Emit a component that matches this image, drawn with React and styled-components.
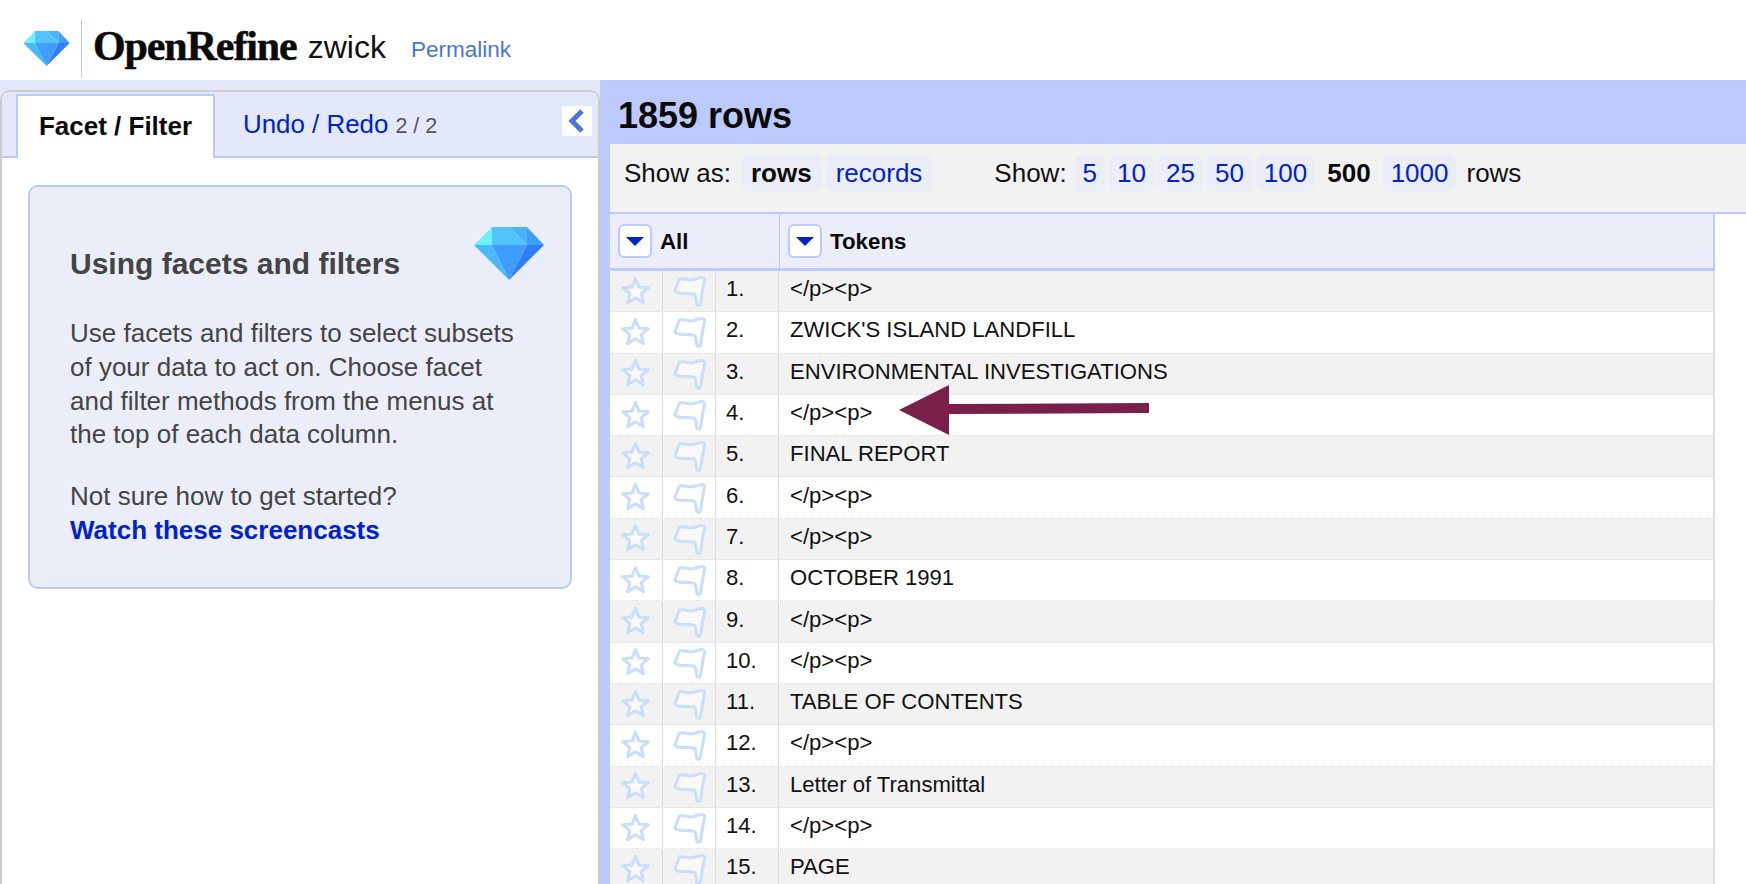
import React from "react";
import styled, { createGlobalStyle } from "styled-components";

const GlobalStyle = createGlobalStyle`
  html, body {
    margin: 0;
    height: 884px;
    overflow: hidden;
    background: #fff;
    font-family: "Liberation Sans", Arial, sans-serif;
  }
`;

const Page = styled.div`
  position: relative;
  width: 1746px;
  height: 884px;
  overflow: hidden;
`;

const Header = styled.header`
  height: 80px;
  display: flex;
  align-items: flex-start;
  box-sizing: border-box;
  padding: 20px 0 0 23px;
`;

const LogoBox = styled.div`
  width: 59px;
  height: 58px;
  border-right: 1px solid #bccafb;
  display: flex;
  align-items: center;
  padding-bottom: 2px;
  box-sizing: border-box;
`;

const Wordmark = styled.span`
  font-family: "Liberation Serif", serif;
  font-weight: 700;
  font-size: 42px;
  line-height: 40px;
  margin: 6px 0 0 11px;
  color: #0a0a0a;
  letter-spacing: -1.1px;
  -webkit-text-stroke: 0.5px #0a0a0a;
`;

const ProjectName = styled.span`
  font-size: 32px;
  line-height: 40px;
  margin: 7px 0 0 11px;
  color: #111;
`;

const Permalink = styled.a`
  font-size: 22.5px;
  line-height: 30px;
  margin: 15px 0 0 25px;
  color: #4a76d8;
`;

const Main = styled.main`
  display: flex;
  height: 804px;
`;

const LeftPanel = styled.section`
  width: 600px;
  flex: none;
  box-sizing: border-box;
  padding-top: 10px;
  background: #e3e8fb;
`;

const TabBox = styled.div`
  height: 100%;
  box-sizing: border-box;
  background: #fff;
  border: 2px solid #ccc;
  border-bottom: none;
  border-radius: 10px 10px 0 0;
`;

const TabBar = styled.div`
  height: 66px;
  box-sizing: border-box;
  display: flex;
  align-items: flex-end;
  padding: 0 6px 0 14px;
  background: #e3e8fb;
  border-bottom: 2px solid #bccafb;
  border-radius: 8px 8px 0 0;
`;

const ActiveTab = styled.div`
  width: 199px;
  height: 64px;
  margin-bottom: -2px;
  box-sizing: border-box;
  background: #fff;
  border: 2px solid #bccafb;
  border-bottom: none;
  font-size: 26px;
  font-weight: 700;
  line-height: 60px;
  text-align: center;
  color: #0a0a0a;
`;

const InactiveTab = styled.div`
  margin-left: 28px;
  height: 62px;
  font-size: 25.9px;
  line-height: 60px;
  color: #0022cc;
`;

const TabCount = styled.span`
  font-size: 21.5px;
  margin-left: 7px;
  color: #555;
`;

const CollapseButton = styled.button`
  width: 30px;
  height: 30px;
  margin: 0 0 20px auto;
  padding: 0;
  border: none;
  border-radius: 2px;
  background: #fff;
  display: flex;
  align-items: center;
  justify-content: center;
  align-self: flex-end;
`;

const HelpCard = styled.div`
  position: relative;
  width: 544px;
  height: 404px;
  margin: 27px 0 0 26px;
  box-sizing: border-box;
  padding: 59px 0 0 40px;
  background: #ebeef8;
  border: 2px solid #bccafb;
  border-radius: 10px;
  color: #444;
`;

const CardGem = styled.div`
  position: absolute;
  top: 40px;
  right: 26px;
`;

const CardTitle = styled.h2`
  margin: 0 0 35px;
  font-size: 30px;
  line-height: 36px;
  font-weight: 700;
  color: #444;
`;

const CardText = styled.p`
  margin: 0 0 28px;
  font-size: 26px;
  line-height: 33.8px;
`;

const CardLink = styled.a`
  display: block;
  font-weight: 700;
  color: #0022cc;
`;

const RightPanel = styled.section`
  flex: 1;
  min-width: 0;
  background: #fff;
`;

const CountBand = styled.div`
  height: 64px;
  box-sizing: border-box;
  padding-left: 18px;
  background: #bccafb;
  font-size: 36px;
  font-weight: 700;
  line-height: 72px;
  color: #0a0a0a;
`;

const Workspace = styled.div`
  height: 740px;
  border-left: 10px solid #bccafb;
`;

const ControlBar = styled.div`
  height: 70px;
  box-sizing: border-box;
  display: flex;
  align-items: flex-start;
  padding: 10px 0 0 14px;
  background: #f2f2f2;
  border-bottom: 2px solid #bccafb;
  font-size: 26px;
  line-height: 38px;
  color: #111;
`;

const ControlLabel = styled.span`
  margin: ${(p) => p.$margin || "0"};
`;

const Chip = styled.span`
  height: 38px;
  padding: 0 ${(p) => p.$pad || 8}px;
  margin-left: ${(p) => p.$gap || 4}px;
  border-radius: 8px;
  background: ${(p) => (p.$plain ? "transparent" : "#ebeef8")};
  color: ${(p) => (p.$current ? "#0a0a0a" : "#0022cc")};
  font-weight: ${(p) => (p.$current ? 700 : 400)};
`;

const Table = styled.div`
  width: 1105px;
`;

const HeaderRow = styled.div`
  display: grid;
  grid-template-columns: 169px 1fr;
  height: 57px;
  box-sizing: border-box;
  background: #ebeef8;
  border-bottom: 3px solid #bccafb;
  border-right: 2px solid #bccafb;
`;

const HeaderCell = styled.div`
  display: flex;
  align-items: center;
  box-sizing: border-box;
  padding-left: 8px;
  font-size: 22.3px;
  font-weight: 700;
  color: #0a0a0a;
  & + & {
    border-left: 1px solid #bccafb;
  }
`;

const HeaderLabel = styled.span`
  margin-top: 2px;
`;

const MenuButton = styled.span`
  width: 34px;
  height: 34px;
  margin-right: 8px;
  box-sizing: border-box;
  display: flex;
  align-items: center;
  justify-content: center;
  background: #fff;
  border: 2px solid #bccafb;
  border-radius: 6px;
  &::after {
    content: "";
    border-left: 9px solid transparent;
    border-right: 9px solid transparent;
    border-top: 9px solid #0022cc;
  }
`;

const Row = styled.div`
  display: grid;
  grid-template-columns: 53px 53px 63px 1fr;
  height: 41.3px;
  box-sizing: border-box;
  background: ${(p) => (p.$odd ? "#f2f2f2" : "#fff")};
  border-bottom: 1px dotted #ddd;
  border-right: 2px solid #ddd;
  font-size: 22.1px;
  color: #111;
`;

const Cell = styled.div`
  display: flex;
  align-items: center;
  box-sizing: border-box;
  padding-left: ${(p) => p.$pad || 0}px;
  padding-bottom: ${(p) => p.$lift || 0}px;
  border-right: ${(p) => (p.$last ? "none" : "1px solid #ddd")};
`;

const RowIcon = styled.svg`
  flex: none;
  overflow: visible;
  filter: blur(0.6px);
`;

const ArrowOverlay = styled.svg`
  position: absolute;
  left: 899px;
  top: 385px;
`;

const Gem = ({ width, height }) => (
  <svg width={width} height={height} viewBox="0 0 70 53">
    <polygon points="0,18 18,0 18,18" fill="#6fefff" />
    <polygon points="18,0 35,0 18,18" fill="#55ccff" />
    <polygon points="35,0 53,0 53,18" fill="#4ab4fb" />
    <polygon points="18,0 35,0 53,18 18,18" fill="#52c4fb" />
    <polygon points="53,0 70,18 53,18" fill="#3f9dfb" />
    <polygon points="0,18 18,18 35,53" fill="#4ab8fb" />
    <polygon points="18,18 53,18 35,53" fill="#3f9dfb" />
    <polygon points="53,18 70,18 35,53" fill="#2f7dfb" />
  </svg>
);

const StarIcon = () => (
  <RowIcon width="31" height="31" viewBox="0 0 30 30">
    <path
      d="M15 2.5l3.4 8.2 8.9.7-6.8 5.7 2.1 8.7-7.6-4.7-7.6 4.7 2.1-8.7-6.8-5.7 8.9-.7z"
      fill="#fff"
      fillOpacity="0.5"
      stroke="#c8defc"
      strokeWidth="3"
      strokeLinejoin="round"
    />
  </RowIcon>
);

const FlagIcon = () => (
  <RowIcon width="32" height="32" viewBox="0 0 30 30">
    <path
      d="M5 4C9 2 14 6 19 4c3-1 6-2 8-1.500 2 .5 2 2 1.500 3.500-1.500 6-2.500 14-3.500 20-.5 3.500-3.500 3-4 0-.5-3 0-7-2-8-4-1.500-12 0-16-1.500-2-.5-2.500-2-1.500-3.500z"
      fill="#fff"
      fillOpacity="0.5"
      stroke="#c8defc"
      strokeWidth="2.8"
      strokeLinejoin="round"
    />
  </RowIcon>
);

const tokens = [
  "</p><p>",
  "ZWICK'S ISLAND LANDFILL",
  "ENVIRONMENTAL INVESTIGATIONS",
  "</p><p>",
  "FINAL REPORT",
  "</p><p>",
  "</p><p>",
  "OCTOBER 1991",
  "</p><p>",
  "</p><p>",
  "TABLE OF CONTENTS",
  "</p><p>",
  "Letter of Transmittal",
  "</p><p>",
  "PAGE",
];

const pageSizes = ["5", "10", "25", "50", "100", "500", "1000"];

export default function App() {
  return (
    <Page>
      <GlobalStyle />
      <Header>
        <LogoBox>
          <Gem width={47} height={35} />
        </LogoBox>
        <Wordmark>OpenRefine</Wordmark>
        <ProjectName>zwick</ProjectName>
        <Permalink>Permalink</Permalink>
      </Header>
      <Main>
        <LeftPanel>
          <TabBox>
            <TabBar>
              <ActiveTab>Facet / Filter</ActiveTab>
              <InactiveTab>
                Undo / Redo<TabCount>2 / 2</TabCount>
              </InactiveTab>
              <CollapseButton>
                <svg width="20" height="26" viewBox="0 0 20 26">
                  <path d="M15 3L5 13l10 10" fill="none" stroke="#4a76d8" strokeWidth="5" />
                </svg>
              </CollapseButton>
            </TabBar>
            <HelpCard>
              <CardGem>
                <Gem width={70} height={53} />
              </CardGem>
              <CardTitle>Using facets and filters</CardTitle>
              <CardText>
                Use facets and filters to select subsets
                <br />
                of your data to act on. Choose facet
                <br />
                and filter methods from the menus at
                <br />
                the top of each data column.
              </CardText>
              <CardText>
                Not sure how to get started?
                <CardLink>Watch these screencasts</CardLink>
              </CardText>
            </HelpCard>
          </TabBox>
        </LeftPanel>
        <RightPanel>
          <CountBand>1859 rows</CountBand>
          <Workspace>
            <ControlBar>
              <ControlLabel>Show as:</ControlLabel>
              <Chip $current $gap={10} $pad={10}>
                rows
              </Chip>
              <Chip $pad={10}>records</Chip>
              <ControlLabel $margin="0 4px 0 62px">Show:</ControlLabel>
              {pageSizes.map((size) => (
                <Chip key={size} $current={size === "500"} $plain={size === "500"}>
                  {size}
                </Chip>
              ))}
              <ControlLabel $margin="0 0 0 10px">rows</ControlLabel>
            </ControlBar>
            <Table>
              <HeaderRow>
                <HeaderCell>
                  <MenuButton />
                  <HeaderLabel>All</HeaderLabel>
                </HeaderCell>
                <HeaderCell>
                  <MenuButton />
                  <HeaderLabel>Tokens</HeaderLabel>
                </HeaderCell>
              </HeaderRow>
              {tokens.map((token, i) => (
                <Row key={i} $odd={i % 2 === 0}>
                  <Cell $pad={10}>
                    <StarIcon />
                  </Cell>
                  <Cell $pad={11}>
                    <FlagIcon />
                  </Cell>
                  <Cell $pad={10} $lift={4}>
                    {i + 1}.
                  </Cell>
                  <Cell $pad={11} $lift={4} $last>
                    {token}
                  </Cell>
                </Row>
              ))}
            </Table>
          </Workspace>
        </RightPanel>
      </Main>
      <ArrowOverlay width="251" height="50" viewBox="0 0 251 50">
        <polygon points="0,25 50,0 50,19 250,18 250,28 50,29 50,50" fill="#7a2048" />
      </ArrowOverlay>
    </Page>
  );
}
